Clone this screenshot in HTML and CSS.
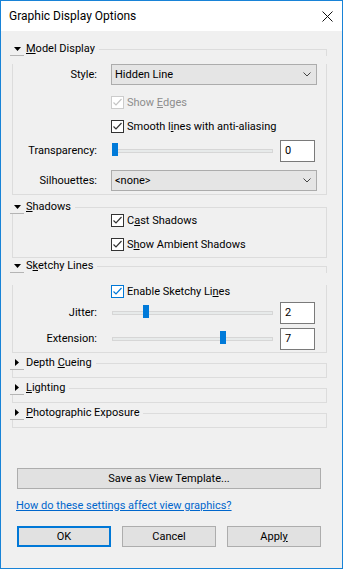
FILE: index.html
```html
<!DOCTYPE html>
<html lang="en">
<head>
  <meta charset="UTF-8">
  <title>Graphic Display Options</title>
  <link rel="stylesheet" href="styles.css">
</head>
<body>
  <div class="window">
    <div class="titlebar">
      <span class="title">Graphic Display Options</span>
      <svg class="close" width="11" height="11" viewBox="0 0 11 11"><path d="M0.5 0.5L10.5 10.5M10.5 0.5L0.5 10.5" stroke="#111" stroke-width="1"/></svg>
    </div>

    <div class="content">
      <!-- model display -->
      <div class="group">
        <div class="group-head">
          <span class="toggle"><svg width="7" height="4" viewBox="0 0 7 4"><polygon points="0,0 7,0 3.5,4" fill="#000"/></svg></span>
          <span class="group-title"><u>M</u>odel Display</span>
          <span class="group-line"></span>
        </div>
        <div class="group-body model">
          <div class="row r-style">
            <span class="lbl">Style:</span>
            <div class="combo">
              <span>Hidden Line</span>
              <svg width="8" height="5" viewBox="0 0 8 5"><polyline points="0.5,0.5 4,4 7.5,0.5" fill="none" stroke="#444" stroke-width="1"/></svg>
            </div>
          </div>
          <label class="check disabled r-edges">
            <span class="box"><svg width="11" height="11" viewBox="0 0 11 11"><polyline points="1.5,5.5 4,8 9.5,2" fill="none" stroke="#c4c4c4" stroke-width="1.2"/></svg></span>
            <span>Show <u>E</u>dges</span>
          </label>
          <label class="check r-smooth">
            <span class="box"><svg width="11" height="11" viewBox="0 0 11 11"><polyline points="1.5,5.5 4,8 9.5,2" fill="none" stroke="#333" stroke-width="1.2"/></svg></span>
            <span>Smooth l<u>i</u>nes with anti-aliasing</span>
          </label>
          <div class="row r-trans">
            <span class="lbl">Transparency:</span>
            <div class="slider">
              <span class="track"></span>
              <span class="thumb" style="left: 0px"></span>
            </div>
            <span class="num">0</span>
          </div>
          <div class="row r-sil">
            <span class="lbl">Silhouettes:</span>
            <div class="combo">
              <span>&lt;none&gt;</span>
              <svg width="8" height="5" viewBox="0 0 8 5"><polyline points="0.5,0.5 4,4 7.5,0.5" fill="none" stroke="#444" stroke-width="1"/></svg>
            </div>
          </div>
        </div>
      </div>

      <!-- shadows -->
      <div class="group g-shadows">
        <div class="group-head">
          <span class="toggle"><svg width="7" height="4" viewBox="0 0 7 4"><polygon points="0,0 7,0 3.5,4" fill="#000"/></svg></span>
          <span class="group-title"><u>S</u>hadows</span>
          <span class="group-line"></span>
        </div>
        <div class="group-body shadows">
          <label class="check">
            <span class="box"><svg width="11" height="11" viewBox="0 0 11 11"><polyline points="1.5,5.5 4,8 9.5,2" fill="none" stroke="#333" stroke-width="1.2"/></svg></span>
            <span>C<u>a</u>st Shadows</span>
          </label>
          <label class="check r-ambient">
            <span class="box"><svg width="11" height="11" viewBox="0 0 11 11"><polyline points="1.5,5.5 4,8 9.5,2" fill="none" stroke="#333" stroke-width="1.2"/></svg></span>
            <span>S<u>h</u>ow Ambient Shadows</span>
          </label>
        </div>
      </div>

      <!-- sketchy lines -->
      <div class="group g-sketchy">
        <div class="group-head">
          <span class="toggle"><svg width="7" height="4" viewBox="0 0 7 4"><polygon points="0,0 7,0 3.5,4" fill="#000"/></svg></span>
          <span class="group-title">S<u>k</u>etchy Lines</span>
          <span class="group-line"></span>
        </div>
        <div class="group-body sketchy">
          <label class="check focus r-enable">
            <span class="box"><svg width="11" height="11" viewBox="0 0 11 11"><polyline points="1.5,5.5 4,8 9.5,2" fill="none" stroke="#0078d7" stroke-width="1.2"/></svg></span>
            <span>Enable Sketchy Li<u>n</u>es</span>
          </label>
          <div class="row r-jitter">
            <span class="lbl">Jitter:</span>
            <div class="slider">
              <span class="track"></span>
              <span class="thumb" style="left: 30.8px"></span>
            </div>
            <span class="num">2</span>
          </div>
          <div class="row r-ext">
            <span class="lbl">Extension:</span>
            <div class="slider">
              <span class="track"></span>
              <span class="thumb" style="left: 107.8px"></span>
            </div>
            <span class="num">7</span>
          </div>
        </div>
      </div>

      <!-- collapsed groups -->
      <div class="group g-collapsed">
        <div class="group-head">
          <span class="toggle"><svg width="4" height="7" viewBox="0 0 4 7"><polygon points="0,0 4,3.5 0,7" fill="#000"/></svg></span>
          <span class="group-title">Depth <u>C</u>ueing</span>
          <span class="group-line"></span>
        </div>
        <div class="group-body collapsed"></div>
      </div>

      <div class="group g-collapsed">
        <div class="group-head">
          <span class="toggle"><svg width="4" height="7" viewBox="0 0 4 7"><polygon points="0,0 4,3.5 0,7" fill="#000"/></svg></span>
          <span class="group-title"><u>L</u>ighting</span>
          <span class="group-line"></span>
        </div>
        <div class="group-body collapsed"></div>
      </div>

      <div class="group g-collapsed">
        <div class="group-head">
          <span class="toggle"><svg width="4" height="7" viewBox="0 0 4 7"><polygon points="0,0 4,3.5 0,7" fill="#000"/></svg></span>
          <span class="group-title"><u>P</u>hotographic Exposure</span>
          <span class="group-line"></span>
        </div>
        <div class="group-body collapsed"></div>
      </div>

      <button class="btn save">Save as View Template...</button>

      <a class="help" href="#">How do these settings affect view graphics?</a>

      <div class="actions">
        <button class="btn default">OK</button>
        <button class="btn">Cancel</button>
        <button class="btn">Appl<u>y</u></button>
      </div>
    </div>
  </div>
</body>
</html>
```

FILE: styles.css
```css
body {
  margin: 0;
  font-family: Roboto, 'Noto Sans', sans-serif;
  font-size: 11px;
  line-height: 16px;
  color: #000;
  background: #fff;
}

.window {
  width: 343px;
  height: 569px;
  box-sizing: border-box;
  border: 1px solid #1883d7;
  display: flex;
  flex-direction: column;
}

.titlebar {
  height: 30px;
  background: #fff;
  display: flex;
  align-items: center;
  justify-content: space-between;
  padding: 0 9px 0 8px;
  flex-shrink: 0;
}

.title {
  font-size: 12px;
}

.content {
  flex: 1;
  background: #f0f0f0;
  padding: 11px 15px 0 11px;
}

/* group boxes */

.group-head {
  display: flex;
  align-items: center;
  height: 14px;
}

.toggle {
  width: 14px;
  height: 13px;
  margin-left: -2px;
  border-bottom: 1px solid #b4b4b4;
  display: flex;
  align-items: center;
  justify-content: center;
  flex-shrink: 0;
}

.group-title {
  margin-left: 2px;
  padding-right: 4px;
  white-space: nowrap;
}

.group-line {
  flex: 1;
  align-self: flex-end;
  height: 6px;
  border-top: 1px solid #dcdcdc;
  border-right: 1px solid #dcdcdc;
}

.group-body {
  border: 1px solid #dcdcdc;
  border-top: none;
  padding: 0 9px 0 0;
}

.model { padding-bottom: 3px; }
.g-shadows { margin-top: 5px; }
.shadows { padding-bottom: 6px; }
.g-sketchy { margin-top: 1px; }
.sketchy { padding-bottom: 2px; }
.g-collapsed { margin-top: 3px; }
.collapsed { height: 7px; }

/* rows */

.row {
  display: flex;
  align-items: center;
}

.lbl {
  width: 84px;
  margin-right: 14px;
  text-align: right;
  flex-shrink: 0;
  white-space: nowrap;
}

.r-style { margin-top: 8px; height: 21px; }
.r-edges { margin-top: 11px; }
.r-smooth { margin-top: 11px; }
.r-trans { margin-top: 7px; height: 22px; }
.r-sil { margin-top: 8px; height: 21px; }
.r-ambient { margin-top: 11px; }
.r-enable { margin-top: 12px; }
.r-jitter { margin-top: 4px; height: 22px; }
.r-ext { margin-top: 4px; height: 22px; }

.combo {
  flex: 1;
  height: 21px;
  box-sizing: border-box;
  background: #e5e5e5;
  border: 1px solid #acacac;
  display: flex;
  align-items: center;
  justify-content: space-between;
  padding: 0 5px 0 3px;
}

.check {
  display: flex;
  align-items: center;
  height: 13px;
  padding-left: 98px;
  white-space: nowrap;
}

.box {
  width: 13px;
  height: 13px;
  box-sizing: border-box;
  border: 1px solid #333;
  background: #fff;
  margin-right: 3px;
  display: flex;
  align-items: center;
  justify-content: center;
  flex-shrink: 0;
}

.check.disabled {
  color: #8d8d8d;
}

.check.disabled .box {
  border-color: #cccccc;
}

.check.focus .box {
  border-color: #0078d7;
}

.slider {
  position: relative;
  width: 161px;
  height: 22px;
  margin-left: 1px;
  display: flex;
  align-items: center;
}

.track {
  width: 100%;
  height: 4px;
  box-sizing: border-box;
  background: #e7eaea;
  border: 1px solid #d6d6d6;
}

.thumb {
  position: absolute;
  top: 3px;
  width: 6px;
  height: 13px;
  background: #007ad9;
}

.num {
  width: 35px;
  height: 22px;
  box-sizing: border-box;
  margin-left: 7px;
  background: #fff;
  border: 1px solid #7a7a7a;
  padding: 2px 0 0 4px;
}

/* buttons */

.btn {
  font-family: inherit;
  font-size: 11px;
  color: #000;
  height: 21px;
  box-sizing: border-box;
  background: #e1e1e1;
  border: 1px solid #adadad;
  padding: 0;
  display: block;
}

.save {
  width: 304px;
  margin: 40px 0 0 5px;
}

.help {
  display: block;
  margin: 9px 0 0 4px;
  color: #0066cc;
  text-decoration: underline;
  width: max-content;
}

.actions {
  display: flex;
  gap: 11px;
  margin: 12px 0 0 5px;
}

.actions .btn {
  width: 94px;
}

.btn.default {
  border: 2px solid #0078d7;
}
```
